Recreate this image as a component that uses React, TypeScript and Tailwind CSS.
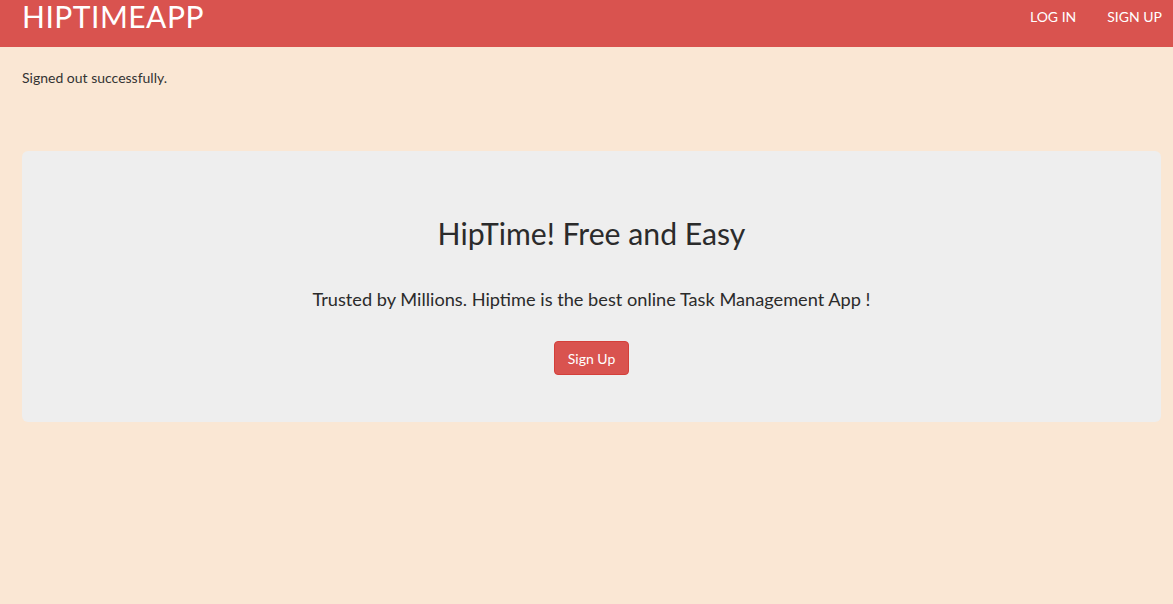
export default function App() {
  return (
    <div className="min-h-[604px] bg-[#fae7d4] text-[#333333]" style={{ fontFamily: "Lato, 'Open Sans', sans-serif" }}>
      <nav className="h-[47px] bg-[#d9534f] flex items-center justify-between pl-[22px] pr-[11px]">
        <a className="text-[30px] leading-[30px] text-white uppercase tracking-[0.5px] -mt-[15px]">HipTimeApp</a>
        <div className="flex items-center -mt-[14px]">
          <a className="text-[14px] text-white uppercase px-[15px]">Log in</a>
          <a className="text-[14px] text-white uppercase pl-[16px]">Sign up</a>
        </div>
      </nav>
      <div className="pl-[22px] pr-[12px]">
        <p className="text-[14px] mt-[21px] leading-[20px]">Signed out successfully.</p>
        <div className="mt-[63px] h-[271px] bg-[#eeeeee] rounded-[6px] flex flex-col items-center pt-[62px]">
          <h1 className="text-[30.2px] leading-[40px] font-normal text-[#2b2b2b]">HipTime! Free and Easy</h1>
          <p className="text-[18.2px] leading-[26px] mt-[33px] text-[#2b2b2b]">Trusted by Millions. Hiptime is the best online Task Management App !</p>
          <button className="mt-[29px] h-[34px] px-[12.5px] bg-[#d9534f] border border-[#d43f3a] rounded-[4px] text-white text-[14px]">Sign Up</button>
        </div>
      </div>
    </div>
  );
}
